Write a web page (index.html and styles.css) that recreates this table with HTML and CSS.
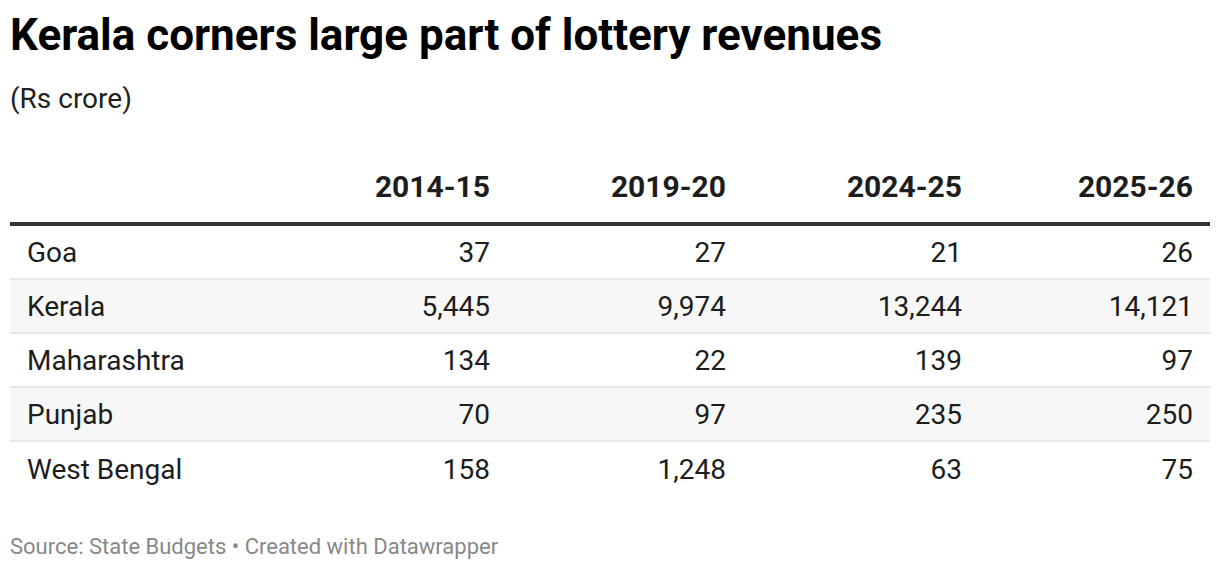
FILE: index.html
```html
<!DOCTYPE html>
<html>
<head>
<meta charset="utf-8">
<link rel="stylesheet" href="styles.css">
</head>
<body>
<div class="chart">
  <h1 class="title">Kerala corners large part of lottery revenues</h1>
  <p class="subtitle">(Rs crore)</p>
  <div class="table">
    <div class="row head">
      <div class="cell name"></div>
      <div class="cell num">2014-15</div>
      <div class="cell num">2019-20</div>
      <div class="cell num">2024-25</div>
      <div class="cell num last">2025-26</div>
    </div>
    <div class="row">
      <div class="cell name">Goa</div>
      <div class="cell num">37</div>
      <div class="cell num">27</div>
      <div class="cell num">21</div>
      <div class="cell num last">26</div>
    </div>
    <div class="row striped">
      <div class="cell name">Kerala</div>
      <div class="cell num">5,445</div>
      <div class="cell num">9,974</div>
      <div class="cell num">13,244</div>
      <div class="cell num last">14,121</div>
    </div>
    <div class="row">
      <div class="cell name">Maharashtra</div>
      <div class="cell num">134</div>
      <div class="cell num">22</div>
      <div class="cell num">139</div>
      <div class="cell num last">97</div>
    </div>
    <div class="row striped">
      <div class="cell name">Punjab</div>
      <div class="cell num">70</div>
      <div class="cell num">97</div>
      <div class="cell num">235</div>
      <div class="cell num last">250</div>
    </div>
    <div class="row lastrow">
      <div class="cell name">West Bengal</div>
      <div class="cell num">158</div>
      <div class="cell num">1,248</div>
      <div class="cell num">63</div>
      <div class="cell num last">75</div>
    </div>
  </div>
  <p class="footer">Source: State Budgets • Created with Datawrapper</p>
</div>
</body>
</html>
```
FILE: styles.css
```css
html, body {
  margin: 0;
  padding: 0;
  background: #ffffff;
}
body {
  font-family: Roboto, "Liberation Sans", sans-serif;
  color: #1d1d1d;
}
.chart {
  padding: 10px 10px 0 10px;
}
.title {
  margin: 0;
  font-size: 44px;
  font-weight: 700;
  line-height: 50px;
  color: #000;
}
.subtitle {
  margin: 23px 0 0 0;
  font-size: 28px;
  line-height: 32px;
  color: #222;
}
.table {
  margin-top: 49px;
}
.row {
  display: grid;
  grid-template-columns: 252px 236px 236px 236px 240px;
  height: 54px;
  align-items: center;
  border-bottom: 2px solid #e8e8e8;
  box-sizing: border-box;
}
.row.striped {
  background: #f7f7f7;
}
.row.lastrow {
  border-bottom: none;
}
.row.head {
  height: 62px;
  border-bottom: 4px solid #333;
  align-items: start;
}
.head .cell {
  font-size: 30px;
  line-height: 34px;
  font-weight: 700;
  padding-top: 6px;
}
.cell {
  font-size: 28px;
  line-height: 32px;
  padding-top: 2px;
}
.name {
  padding-left: 17px;
}
.num {
  text-align: right;
  padding-right: 8px;
}
.num.last {
  padding-right: 17px;
}
.footer {
  margin: 38px 0 0 0;
  font-size: 22px;
  line-height: 26px;
  color: #888888;
}
```
